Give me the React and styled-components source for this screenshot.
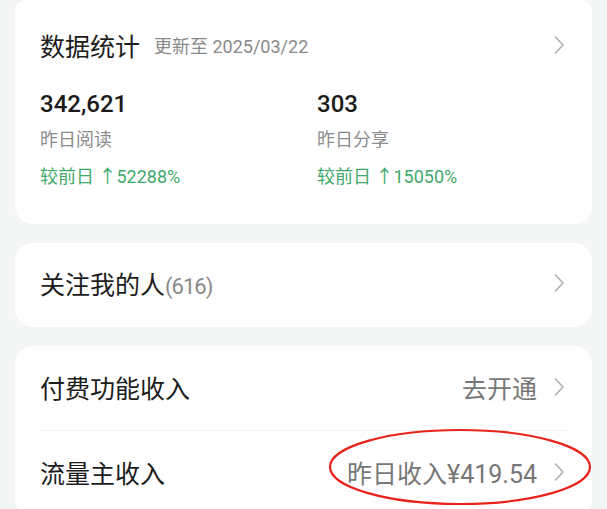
import React from 'react';
import styled, { createGlobalStyle } from 'styled-components';

const GlobalStyle = createGlobalStyle`
  html, body {
    margin: 0;
    padding: 0;
    background: #f4f5f5;
  }
  body {
    font-family: "Noto Sans", "Noto Sans CJK SC", sans-serif;
    color: #1f1f1f;
  }
`;

const Page = styled.div`
  display: flex;
  flex-direction: column;
  gap: 19px;
  padding: 0 15px;
  width: 607px;
  height: 509px;
  box-sizing: border-box;
  overflow: hidden;
`;

const Card = styled.div`
  background: #fff;
  border-radius: 18px;
  flex-shrink: 0;
`;

const StatsCard = styled(Card)`
  height: 224px;
  box-sizing: border-box;
  padding: 29px 27px 0 25px;
  border-top-left-radius: 10px;
  border-top-right-radius: 10px;
`;

const TitleRow = styled.div`
  display: flex;
  align-items: center;
  height: 32px;
`;

const Title = styled.div`
  font-size: 25px;
  color: #1c1c1c;
  font-family: "Noto Sans CJK SC", sans-serif;
`;

const Sub = styled.div`
  margin-left: 14px;
  font-size: 18px;
  color: #8a8a8a;
  font-family: "Roboto", "Noto Sans CJK SC", sans-serif;
  flex: 1;
`;

const StatGrid = styled.div`
  display: grid;
  grid-template-columns: 277px 1fr;
  margin-top: 28px;
`;

const Stat = styled.div`
  display: flex;
  flex-direction: column;
`;

const Number = styled.div`
  font-family: "Roboto", sans-serif;
  font-weight: 500;
  font-size: 24px;
  line-height: 30px;
  color: #1a1a1a;
`;

const Label = styled.div`
  margin-top: 6px;
  font-size: 18px;
  line-height: 26px;
  color: #8c8c8c;
  font-family: "Noto Sans CJK SC", sans-serif;
`;

const Change = styled.div`
  margin-top: 13px;
  font-size: 18px;
  line-height: 26px;
  color: #3fa96c;
  font-family: "Roboto", "Noto Sans CJK SC", sans-serif;
`;

const ListCard = styled(Card)`
  display: flex;
  flex-direction: column;
`;

const Row = styled.div`
  position: relative;
  display: flex;
  align-items: center;
  height: ${p => p.h || 85}px;
  box-sizing: border-box;
  padding: 0 27px 4px 25px;
  &::after {
    content: '';
    display: ${p => (p.divider ? 'block' : 'none')};
    position: absolute;
    left: 25px;
    right: 24px;
    bottom: 0;
    height: 1px;
    background: #f0f0f0;
  }
`;

const RowLabel = styled.div`
  flex: 1;
  font-size: 25px;
  color: #1c1c1c;
  font-family: "Noto Sans CJK SC", sans-serif;
`;

const Count = styled.span`
  color: #8a8a8a;
  font-family: "Roboto", sans-serif;
  font-size: 22px;
  letter-spacing: -1px;
`;

const RowValue = styled.div`
  font-size: 25px;
  color: #777;
  margin-right: 16px;
  font-family: "Roboto", "Noto Sans CJK SC", sans-serif;
`;

const Ring = styled.svg`
  position: absolute;
  left: 312px;
  top: -4px;
  pointer-events: none;
`;

const Chevron = () => (
  <svg width="12" height="20" viewBox="0 0 12 20">
    <path d="M2.5 2 L10 10 L2.5 18" fill="none" stroke="#b0b0b0" strokeWidth="1.7" strokeLinecap="round" strokeLinejoin="round" />
  </svg>
);

const stats = [
  { value: '342,621', label: '昨日阅读', change: '52288%' },
  { value: '303', label: '昨日分享', change: '15050%' },
];

export default function App() {
  return (
    <>
      <GlobalStyle />
      <Page>
        <StatsCard>
          <TitleRow>
            <Title>数据统计</Title>
            <Sub>更新至 2025/03/22</Sub>
            <Chevron />
          </TitleRow>
          <StatGrid>
            {stats.map(s => (
              <Stat key={s.label}>
                <Number>{s.value}</Number>
                <Label>{s.label}</Label>
                <Change>较前日 ↑{s.change}</Change>
              </Stat>
            ))}
          </StatGrid>
        </StatsCard>

        <ListCard>
          <Row h={84}>
            <RowLabel>关注我的人<Count>(616)</Count></RowLabel>
            <Chevron />
          </Row>
        </ListCard>

        <ListCard>
          <Row divider>
            <RowLabel>付费功能收入</RowLabel>
            <RowValue>去开通</RowValue>
            <Chevron />
          </Row>
          <Row>
            <RowLabel>流量主收入</RowLabel>
            <RowValue>昨日收入¥419.54</RowValue>
            <Chevron />
            <Ring width="266" height="80" viewBox="0 0 266 80">
              <ellipse cx="133" cy="40" rx="130" ry="37" fill="none" stroke="#e8231c" strokeWidth="2.2" />
            </Ring>
          </Row>
        </ListCard>
      </Page>
    </>
  );
}
